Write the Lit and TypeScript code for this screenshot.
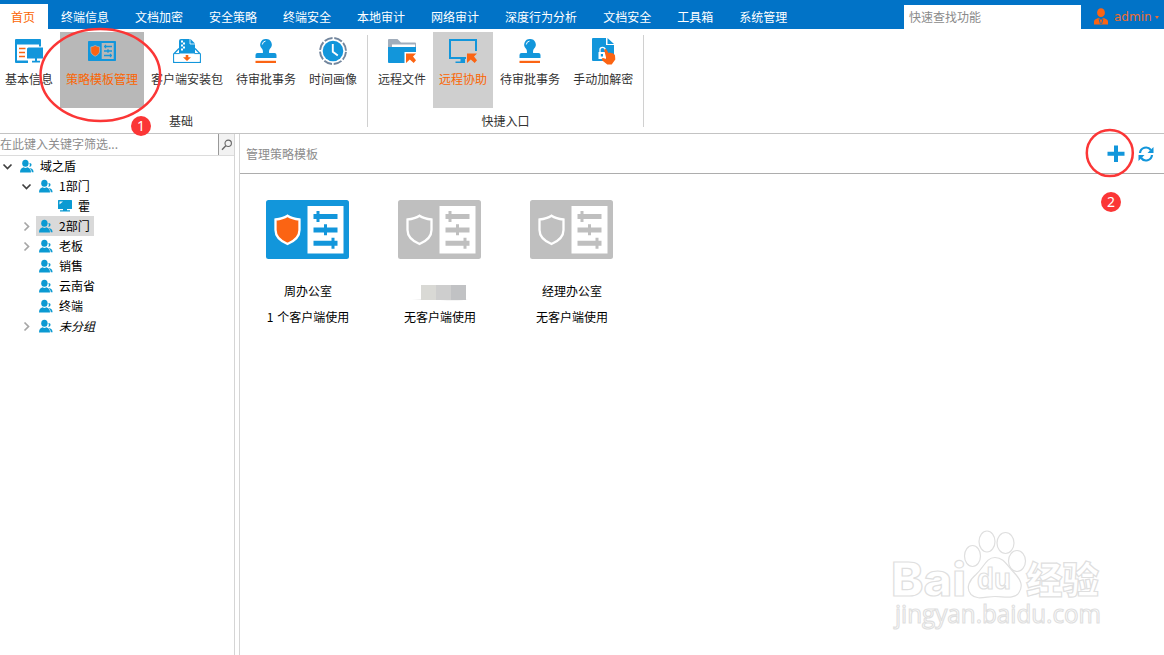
import { LitElement, html, svg, css, nothing } from "lit";
import { customElement, property } from "lit/decorators.js";
import { classMap } from "lit/directives/class-map.js";

const BLUE = "#1296db";
const ORANGE = "#fb6413";

const stamp = svg`
  <path d="M15 3a5.600 5.600 0 0 1 4 9.700c-.8.900-1.100 2.500-.9 4.300h5.400q2 0 2 2v3h-21v-3q0-2 2-2h5.400c.2-1.800-.1-3.400-.9-4.300a5.600 5.600 0 0 1 4-9.700z" fill=${BLUE}/>
  <path d="M11.300 8.500q.3-3 3.200-3.400" stroke="#fff" stroke-width="1" fill="none"/>
  <rect x="4.500" y="24.800" width="20.500" height="2.200" fill=${ORANGE}/>`;

const arrow = svg`<path d="M19 17.500h10l-3 3 3 3.800-2.300 2.700-3.900-3.400L19 27z" fill=${ORANGE}/>`;

const ribbonIcons: Record<string, unknown> = {
  info: svg`
    <path d="M2 3h24q1 0 1 1v6.500h-2V8.500H3V24.500h11v2.500H2q-1 0-1-1V4q0-1 1-1z" fill=${BLUE}/>
    <path d="M5 12.500h6.500M5 16.500h6M5 20.500h6" stroke=${ORANGE} stroke-width="1.600"/>
    <path d="M14.500 11.500H29V22.500h-6v2.300h3v1.700h-8v-1.700h3v-2.300h-8V13q0-1.500 1.500-1.500z" fill=${BLUE}/>`,
  template: svg`
    <rect x="1" y="5" width="28" height="20" rx=".8" fill=${BLUE}/>
    <path d="M8.200 9.400c1.300.9 2.700 1.300 4.400 1.500v4.100c0 2.500-2 4.200-4.400 5.200-2.400-1-4.400-2.700-4.400-5.200v-4.100c1.700-.2 3.100-.6 4.400-1.500z" fill=${ORANGE} stroke="#b8b8b8" stroke-width=".7"/>
    <rect x="14.700" y="7" width="12" height="16" fill="#b8b8b8"/>
    <path d="M17 10.500h8M17 15h8M17 19.500h8" stroke=${BLUE} stroke-width="1.500"/>
    <path d="M18.500 8.800v3.400M21 13.300v3.400M23.500 17.800v3.400" stroke=${BLUE} stroke-width="1.300"/>`,
  pack: svg`
    <path d="M7 17.500V5q0-2 2-2h9.500l4.500 4.500v10z" fill=${BLUE}/>
    <path d="M18 3v5h5" stroke="#fff" fill="none" stroke-width=".8"/>
    <path d="M9 4.500h2v2h-2zM11 6.500h2v2h-2zM9 8.500h2v2h-2zM11 10.500h2v2h-2zM9 12.500h2v2h-2z" fill="#fff"/>
    <path d="M7 12.500L1.700 18v8.300h26.600V18L23 12.500" fill="none" stroke=${BLUE} stroke-width="1.300"/>
    <path d="M2.300 18h25.400v7.700H2.300z" fill="#fff"/>
    <path d="M2 17.600h5.500M22.500 17.600h5.500" stroke=${BLUE} stroke-width="1"/>
    <path d="M13.700 19h2.600v2.300h2.700L15 25l-4-3.700h2.700z" fill=${ORANGE}/>`,
  stamp,
  clock: svg`
    <circle cx="15" cy="15" r="13" fill="none" stroke="#73869d" stroke-width="1.900" stroke-dasharray="8.400 1.810" transform="rotate(4 15 15)"/>
    <circle cx="15" cy="15" r="10.300" fill=${BLUE}/>
    <path d="M14.800 8v7.800l5 3.600" fill="none" stroke="#fff" stroke-width="1.900"/>`,
  folder: svg`
    <path d="M1 4q0-1 1-1h8.500l3.500 3.500H28q1 0 1 1v4H1z" fill="#a1adbb"/>
    <path d="M5 8.500h23v3H5z" fill="#fff"/>
    <path d="M1 11h28v5H17.500v11H2q-1 0-1-1z" fill=${BLUE}/>
    ${arrow}`,
  assist: svg`
    <path d="M18 22H2V4h26v11" fill="none" stroke=${BLUE} stroke-width="2"/>
    <path d="M12.500 22H17v5H7.500v-1.500h5z" fill=${BLUE}/>
    ${arrow}`,
  decrypt: svg`
    <path d="M5 2h13v7h8V25H5q-1 0-1-1V3q0-1 1-1z" fill=${BLUE}/>
    <path d="M19.500 2l6.500 6h-6.500z" fill=${BLUE}/>
    <path d="M12 16v-2.500q0-2.200 2.500-2.200t2.700 2.200v1" fill="none" stroke="#fff" stroke-width="1.300"/>
    <rect x="10.500" y="16" width="7.500" height="7" fill="#fff"/>
    <path d="M12.800 18h2.200v2.500h-2.200z" fill=${BLUE}/>
    <path d="M16.200 14q1.300-1.800 2.600 0l1.600 3q1.500-1 2.800.3 1.500-.6 2.300.8 1.300.1 1.500 1.400l.3 4-3.600 4.900h-4.400L14 24.200q-.8-2.200 1-2.200l3.400 1z" fill=${ORANGE}/>`,
};

interface Action { icon: string; label: string; active?: "pressed" | "hover" }

const tabs = ["首页", "终端信息", "文档加密", "安全策略", "终端安全", "本地审计", "网络审计", "深度行为分析", "文档安全", "工具箱", "系统管理"];

const groups: { title: string; actions: Action[] }[] = [
  {
    title: "基础",
    actions: [
      { icon: "info", label: "基本信息" },
      { icon: "template", label: "策略模板管理", active: "pressed" },
      { icon: "pack", label: "客户端安装包" },
      { icon: "stamp", label: "待审批事务" },
      { icon: "clock", label: "时间画像" },
    ],
  },
  {
    title: "快捷入口",
    actions: [
      { icon: "folder", label: "远程文件" },
      { icon: "assist", label: "远程协助", active: "hover" },
      { icon: "stamp", label: "待审批事务" },
      { icon: "decrypt", label: "手动加解密" },
    ],
  },
];

const tree = [
  { label: "域之盾", level: 0, state: "open" },
  { label: "1部门", level: 1, state: "open" },
  { label: "霍", level: 2, state: "", device: true },
  { label: "2部门", level: 1, state: "closed", selected: true },
  { label: "老板", level: 1, state: "closed" },
  { label: "销售", level: 1, state: "" },
  { label: "云南省", level: 1, state: "" },
  { label: "终端", level: 1, state: "" },
  { label: "未分组", level: 1, state: "closed", italic: true },
];

const templates = [
  { name: "周办公室", usage: "1 个客户端使用", used: true },
  { name: "", usage: "无客户端使用", used: false },
  { name: "经理办公室", usage: "无客户端使用", used: false },
];

@customElement("app-ribbon")
class AppRibbon extends LitElement {
  static styles = css`
    :host { display: block; }
    .tabs { display: flex; height: 29px; background: #0173c7; box-sizing: border-box; padding-top: 4px; color: #fff; }
    .tab { height: 25px; padding: 0 13px; line-height: 26px; white-space: nowrap; }
    .tab.current { background: #fff; color: #fb6502; padding: 0 13px 0 11px; }
    .search { width: 177px; height: 24px; margin: 1px 0 0 auto; box-sizing: border-box; padding-left: 5px; background: #fff; color: #8a8a8a; line-height: 23px; }
    .user { display: flex; align-items: center; width: 83px; flex: none; padding-left: 13px; box-sizing: border-box; color: #ef6c30; font-family: "DejaVu Sans", sans-serif; }
    .user svg { display: block; flex: none; }
    .user-name { margin-left: 6px; font-size: 12px; width: 37px; }
    .caret { margin: 1px 0 0 4px; border: 2.5px solid transparent; border-top: 3px solid #ef6c30; border-bottom: 0; }
    .groups { display: flex; height: 104px; box-sizing: content-box; border-bottom: 1px solid #c3c3c3; margin-left: -1px; }
    .group { display: flex; flex-direction: column; padding: 3px 4px 0 4px; }
    .group:first-child { padding-left: 0; }
    .rule { width: 1px; height: 92px; margin-top: 6px; background: #d0d0d0; }
    .actions { display: flex; gap: 1px; }
    .action { display: flex; flex-direction: column; align-items: center; height: 76px; padding: 4px 6px 0; box-sizing: border-box; color: #333; white-space: nowrap; }
    .action svg { display: block; }
    .action.pressed { background: #b8b8b8; color: #fb6502; }
    .action.hover { background: #cfcfcf; color: #fb6502; }
    .label { line-height: 18px; margin-top: 4px; }
    .title { text-align: center; line-height: 18px; margin-top: 4px; color: #333; }
  `;

  render() {
    return html`
      <div class="tabs">
        ${tabs.map((t, i) => html`<div class=${classMap({ tab: true, current: i === 0 })}>${t}</div>`)}
        <div class="search">快速查找功能</div>
        <div class="user">
          <svg width="14" height="17" viewBox="0 0 14 17" fill="#fb6413">
            <ellipse cx="7" cy="4.700" rx="3.900" ry="4.400"/>
            <path d="M0 16.500v-3q0-2 2-2.600l2.800-1.200L7 12l2.200-2.300 2.800 1.200q2 .6 2 2.600v3z"/>
            <path d="M5 10.500l1.400 5.500M9 10.500L7.600 16" stroke="#0173c7" stroke-width=".9"/>
          </svg>
          <span class="user-name">admin</span><i class="caret"></i>
        </div>
      </div>
      <div class="groups">
        ${groups.map(g => html`
          <div class="group">
            <div class="actions">
              ${g.actions.map(a => html`
                <div class=${classMap({ action: true, pressed: a.active === "pressed", hover: a.active === "hover" })}>
                  <svg width="30" height="30" viewBox="0 0 30 30">${ribbonIcons[a.icon]}</svg>
                  <div class="label">${a.label}</div>
                </div>`)}
            </div>
            <div class="title">${g.title}</div>
          </div>
          <div class="rule"></div>`)}
      </div>`;
  }
}

@customElement("group-tree")
class GroupTree extends LitElement {
  static styles = css`
    :host { display: block; width: 235px; flex: none; box-sizing: border-box; border-right: 1px solid #d5d5d5; }
    .filter { display: flex; height: 22px; box-sizing: border-box; border-bottom: 1px solid #dcdcdc; }
    .hint { flex: 1; color: #8c8c8c; line-height: 20px; }
    .find { width: 16px; box-sizing: border-box; border-left: 1px solid #999; background: #f2f2f2; display: flex; align-items: center; justify-content: center; }
    .row { display: flex; height: 20px; align-items: center; }
    .level0 { padding-left: 2px; }
    .level1 { padding-left: 21px; }
    .level2 { padding-left: 40px; }
    .chevron { width: 11px; height: 11px; flex: none; margin-right: 4px; }
    .node { display: flex; align-items: flex-start; height: 20px; padding: 0 4px 0 3px; color: #000; line-height: 19px; }
    .node svg { flex: none; margin: 3px 6px 0 0; }
    .selected { background: #d9d9d9; }
    .italic { font-style: italic; }
    svg { display: block; }
  `;

  private people() {
    return html`<svg width="14" height="14" viewBox="0 0 14 14" fill="#0b9ad2">
      <ellipse cx="5.400" cy="4.300" rx="3.200" ry="3.500"/>
      <path d="M0 13.500q0-4.200 3.700-5.200Q5.500 9.600 7.300 8.300 11 9.300 11 13.500z"/>
      <path d="M9.400 4q2.200-.1 2.200 1.800 0 1.900-2.300 2.300 1.300-1.800.1-4.100zM9.700 9q3.700.4 3.900 4.200h-1.800q0-2.500-2.100-4.200z"/>
    </svg>`;
  }

  private monitor() {
    return html`<svg width="14" height="14" viewBox="0 0 14 14" fill="#0b9ad2">
      <rect x="0" y="1" width="14" height="9" rx=".5"/>
      <path d="M5 10h4v1.200h3v1.300H2v-1.300h3z"/>
      <path d="M1.500 5.500V2.500h3.500z" fill="#e4f5fb"/>
    </svg>`;
  }

  render() {
    return html`
      <div class="filter">
        <div class="hint">在此键入关键字筛选...</div>
        <div class="find"><svg width="12" height="12" viewBox="0 0 12 12" fill="none" stroke="#666" stroke-width="1.100">
          <circle cx="7.200" cy="4.300" r="3.200"/><path d="M4.800 6.800L1 10.700" stroke-width="1.400"/></svg></div>
      </div>
      ${tree.map(n => html`
        <div class="row level${n.level}">
          <svg class="chevron" viewBox="0 0 11 11" fill="none" stroke-width="1.700">
            ${n.state === "open" ? svg`<path d="M1.500 3.500l4 4 4-4" stroke="#404040"/>`
              : n.state === "closed" ? svg`<path d="M3.500 1.500l4 4-4 4" stroke="#a6a6a6"/>` : nothing}
          </svg>
          <div class=${classMap({ node: true, selected: !!n.selected, italic: !!n.italic })}>
            ${n.device ? this.monitor() : this.people()}<span>${n.label}</span>
          </div>
        </div>`)}`;
  }
}

@customElement("template-card")
class TemplateCard extends LitElement {
  @property() name = "";
  @property() usage = "";
  @property({ type: Boolean }) used = false;

  static styles = css`
    :host { display: flex; flex-direction: column; align-items: center; width: 133px; margin-right: -1px; color: #000; }
    svg { display: block; }
    .name { height: 18px; line-height: 18px; margin-top: 23px; padding-left: 1px; }
    .name svg { margin-top: 1px; }
    .usage { line-height: 18px; margin-top: 8px; padding-left: 1px; word-spacing: 1px; }
  `;

  render() {
    const main = this.used ? BLUE : "#bfbfbf";
    return html`
      <svg width="83" height="59" viewBox="0 0 83 59">
        <rect width="83" height="59" rx="2.500" fill=${main}/>
        <path d="M21.500 15.700C25 18 29 19 33.500 19.500v10.500c0 6.500-5.500 11.300-12 14-6.500-2.700-12-7.500-12-14V19.500C14 19 18 18 21.500 15.700z" fill=${this.used ? ORANGE : main} stroke="#fff" stroke-width="2.300"/>
        <rect x="41.500" y="6" width="36" height="47.500" fill="#fff"/>
        <path d="M47.500 16.500h24M47.500 30h24M47.500 43.300h24" stroke=${main} stroke-width="5"/>
        <path d="M52 11v11M59.500 24.300v11M67 37.800v11" stroke=${main} stroke-width="3"/>
      </svg>
      <div class="name">${this.name || html`
        <svg width="56" height="18" viewBox="0 0 56 18">
          <path d="M0 17q12-2 28-1.500t28 .5q-8 2.500-28 1z" fill="#ececec"/>
          <rect x="9" y="2" width="15" height="15" fill="#d9d9d5"/>
          <rect x="24" y="2" width="15" height="15" fill="#cecece"/>
          <rect x="39" y="2" width="15" height="15" fill="#c1c2c4"/>
        </svg>`}</div>
      <div class="usage">${this.usage}</div>`;
  }
}

@customElement("app-root")
class AppRoot extends LitElement {
  static styles = css`
    :host { display: flex; flex-direction: column; position: relative; width: 1164px; height: 655px; overflow: hidden; background: #fff; font: 12px "Noto Sans CJK SC", sans-serif; }
    .body { display: flex; flex: 1; min-height: 0; }
    .main { flex: 1; margin-left: 4px; border-left: 1px solid #d5d5d5; }
    .bar { display: flex; align-items: center; height: 40px; box-sizing: border-box; border-bottom: 1px solid #adadad; padding: 0 10px 0 6px; color: #8c8c8c; }
    .bar svg { display: block; }
    .plus { margin-left: auto; margin-right: 13px; }
    .cards { display: flex; padding: 26px 0 0 1px; }
    .overlay { position: absolute; inset: 0; pointer-events: none; }
    .num { font: 14px "Noto Sans", sans-serif; fill: #fff; text-anchor: middle; }
    .mark { fill: #fff; stroke: #dfdfdf; stroke-width: 1.200; }
    .brand { font: 800 46px Inter, "Liberation Sans", sans-serif; }
    .brand-cn { font: 900 37px "Noto Sans CJK SC", sans-serif; }
    .du { font: bold 29px "Liberation Sans", sans-serif; }
    .site { font: 25px "Open Sans", sans-serif; }
  `;

  render() {
    return html`
      <app-ribbon></app-ribbon>
      <div class="body">
        <group-tree></group-tree>
        <div class="main">
          <div class="bar">
            <span>管理策略模板</span>
            <svg class="plus" width="18" height="18" viewBox="0 0 18 18"><path d="M9 .5v16.600M.5 8.800h17" stroke=${BLUE} stroke-width="4"/></svg>
            <svg width="16" height="16" viewBox="0 0 16 16">
              <path d="M2 7A6 6 0 0 1 12.800 4M14 9A6 6 0 0 1 3.200 12" fill="none" stroke=${BLUE} stroke-width="2.200"/>
              <path d="M15.500 1v6h-6zM.5 15V9h6z" fill=${BLUE}/>
            </svg>
          </div>
          <div class="cards">
            ${templates.map(t => html`<template-card .name=${t.name} .usage=${t.usage} .used=${t.used}></template-card>`)}
          </div>
        </div>
      </div>
      <svg class="overlay" width="1164" height="655" viewBox="0 0 1164 655">
        <g fill="none" stroke="#fb3636" stroke-width="2.500">
          <ellipse cx="100.300" cy="75" rx="59.800" ry="46"/>
          <circle cx="1109.800" cy="153" r="23"/>
        </g>
        <circle cx="141" cy="126" r="10" fill="#fb3636"/>
        <circle cx="1111" cy="202" r="10" fill="#fb3636"/>
        <text class="num" x="141" y="131">1</text>
        <text class="num" x="1111" y="207">2</text>
        <g class="mark">
          <text class="brand" x="891" y="596" textLength="75" lengthAdjust="spacingAndGlyphs">Bai</text>
          <ellipse cx="972.500" cy="556" rx="8" ry="10.500"/>
          <ellipse cx="987" cy="541.500" rx="8" ry="10.500"/>
          <ellipse cx="1005.500" cy="543" rx="8.500" ry="10.500"/>
          <ellipse cx="1017" cy="561" rx="8.500" ry="10.500"/>
          <path d="M995 557.500c9 0 12 8 18 14 9 9 10 15 6 21-4 7-15 4-24 4s-18 4-24-2c-6-7-1-15 5-20 8-7 10-17 19-17z"/>
          <text class="du" x="977" y="589" textLength="34" lengthAdjust="spacingAndGlyphs">du</text>
          <text class="brand-cn" x="1026" y="594" textLength="73" lengthAdjust="spacingAndGlyphs">经验</text>
          <text class="site" x="895" y="623" textLength="206" lengthAdjust="spacingAndGlyphs">jingyan.baidu.com</text>
        </g>
      </svg>`;
  }
}
